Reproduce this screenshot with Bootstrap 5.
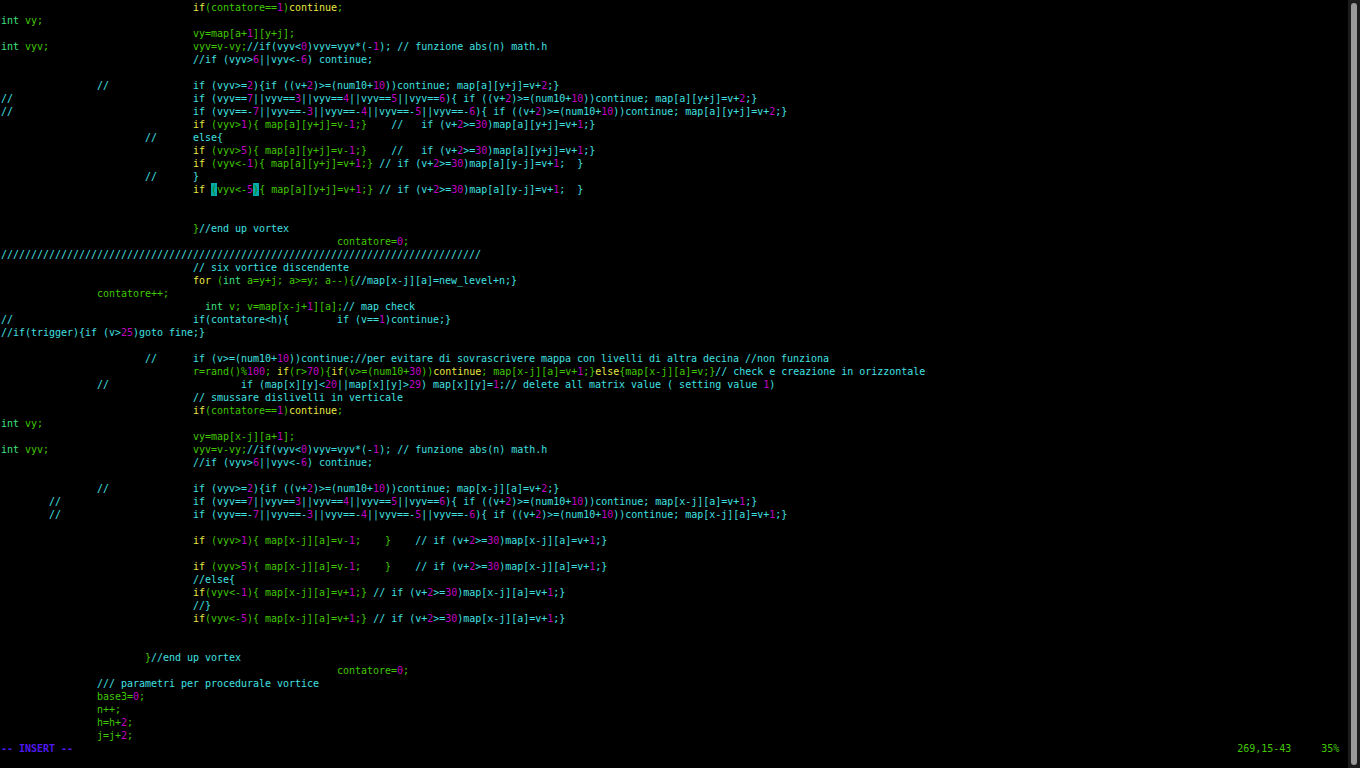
<!DOCTYPE html>
<html lang="it">
<head>
<meta charset="utf-8">
<title>vim</title>
<link href="https://cdn.jsdelivr.net/npm/bootstrap@5.3.0/dist/css/bootstrap.min.css" rel="stylesheet">
<style>
html,body{height:100%;background:#000;overflow:hidden}
.term-shell{height:768px;background:#000}
.term-code{margin:0;padding:1px 0 0 1px;font:10px/13px "DejaVu Sans Mono",monospace;letter-spacing:-.02px;color:#40e0e0;overflow:hidden;white-space:pre}
.kw{color:#e8e840}
.nm{color:#c000c0}
.gr{color:#40c800}
.ty{color:#40e080}
.mt{display:inline-block;background:#00aaaa;color:#208000;height:13px}
.md{color:#5018f0;font-weight:700}
.sb-track{width:12px;background:#1c1c1c;padding:3px}
.sb-thumb{width:6px;background:#999;border-radius:3px}
</style>
</head>
<body>
<div class="term-shell d-flex">
<pre class="term-code flex-grow-1">                                <span class="kw">if</span><span class="gr">(contatore==<span class="nm">1</span>)</span><span class="kw">continue</span><span class="gr">;</span>
<span class="ty">int</span><span class="gr"> vy;</span>
                                <span class="gr">vy=map[a+<span class="nm">1</span>][y+j];</span>
<span class="ty">int</span><span class="gr"> vyv;</span>                        <span class="gr">vyv=v-vy;</span>//if(vyv&lt;<span class="nm">0</span>)vyv=vyv*(-<span class="nm">1</span>); // funzione abs(n) math.h
                                //if (vyv&gt;<span class="nm">6</span>||vyv&lt;-<span class="nm">6</span>) continue;

                //              if (vyv&gt;=<span class="nm">2</span>){if ((v+<span class="nm">2</span>)&gt;=(num10+<span class="nm">10</span>))continue; map[a][y+j]=v+<span class="nm">2</span>;}
//                              if (vyv==<span class="nm">7</span>||vyv==<span class="nm">3</span>||vyv==<span class="nm">4</span>||vyv==<span class="nm">5</span>||vyv==<span class="nm">6</span>){ if ((v+<span class="nm">2</span>)&gt;=(num10+<span class="nm">10</span>))continue; map[a][y+j]=v+<span class="nm">2</span>;}
//                              if (vyv==-<span class="nm">7</span>||vyv==-<span class="nm">3</span>||vyv==-<span class="nm">4</span>||vyv==-<span class="nm">5</span>||vyv==-<span class="nm">6</span>){ if ((v+<span class="nm">2</span>)&gt;=(num10+<span class="nm">10</span>))continue; map[a][y+j]=v+<span class="nm">2</span>;}
                                <span class="kw">if</span><span class="gr"> (vyv&gt;<span class="nm">1</span>){ map[a][y+j]=v-<span class="nm">1</span>;}</span>    //   if (v+<span class="nm">2</span>&gt;=<span class="nm">30</span>)map[a][y+j]=v+<span class="nm">1</span>;}
                        //      else{
                                <span class="kw">if</span><span class="gr"> (vyv&gt;<span class="nm">5</span>){ map[a][y+j]=v-<span class="nm">1</span>;}</span>    //   if (v+<span class="nm">2</span>&gt;=<span class="nm">30</span>)map[a][y+j]=v+<span class="nm">1</span>;}
                                <span class="kw">if</span><span class="gr"> (vyv&lt;-<span class="nm">1</span>){ map[a][y+j]=v+<span class="nm">1</span>;}</span> // if (v+<span class="nm">2</span>&gt;=<span class="nm">30</span>)map[a][y-j]=v+<span class="nm">1</span>;  }
                        //      }
                                <span class="kw">if</span><span class="gr"> <span class="mt">(</span>vyv&lt;-<span class="nm">5</span><span class="mt">)</span>{ map[a][y+j]=v+<span class="nm">1</span>;}</span> // if (v+<span class="nm">2</span>&gt;=<span class="nm">30</span>)map[a][y-j]=v+<span class="nm">1</span>;  }


                                <span class="gr">}</span>//end up vortex
                                                        <span class="gr">contatore=<span class="nm">0</span>;</span>
////////////////////////////////////////////////////////////////////////////////
                                // six vortice discendente
                                <span class="kw">for</span><span class="gr"> (<span class="ty">int</span> a=y+j; a&gt;=y; a--){</span>//map[x-j][a]=new_level+n;}
                <span class="gr">contatore++;</span>
                                  <span class="ty">int</span><span class="gr"> v; v=map[x-j+<span class="nm">1</span>][a];</span>// map check
//                              if(contatore&lt;h){        if (v==<span class="nm">1</span>)continue;}
//if(trigger){if (v&gt;<span class="nm">25</span>)goto fine;}

                        //      if (v&gt;=(num10+<span class="nm">10</span>))continue;//per evitare di sovrascrivere mappa con livelli di altra decina //non funziona
                                <span class="gr">r=rand()%<span class="nm">100</span>; </span><span class="kw">if</span><span class="gr">(r&gt;<span class="nm">70</span>){</span><span class="kw">if</span><span class="gr">(v&gt;=(num10+<span class="nm">30</span>))</span><span class="kw">continue</span><span class="gr">; map[x-j][a]=v+<span class="nm">1</span>;}</span><span class="kw">else</span><span class="gr">{map[x-j][a]=v;}</span>// check e creazione in orizzontale
                //                      if (map[x][y]&lt;<span class="nm">20</span>||map[x][y]&gt;<span class="nm">29</span>) map[x][y]=<span class="nm">1</span>;// delete all matrix value ( setting value <span class="nm">1</span>)
                                // smussare dislivelli in verticale
                                <span class="kw">if</span><span class="gr">(contatore==<span class="nm">1</span>)</span><span class="kw">continue</span><span class="gr">;</span>
<span class="ty">int</span><span class="gr"> vy;</span>
                                <span class="gr">vy=map[x-j][a+<span class="nm">1</span>];</span>
<span class="ty">int</span><span class="gr"> vyv;</span>                        <span class="gr">vyv=v-vy;</span>//if(vyv&lt;<span class="nm">0</span>)vyv=vyv*(-<span class="nm">1</span>); // funzione abs(n) math.h
                                //if (vyv&gt;<span class="nm">6</span>||vyv&lt;-<span class="nm">6</span>) continue;

                //              if (vyv&gt;=<span class="nm">2</span>){if ((v+<span class="nm">2</span>)&gt;=(num10+<span class="nm">10</span>))continue; map[x-j][a]=v+<span class="nm">2</span>;}
        //                      if (vyv==<span class="nm">7</span>||vyv==<span class="nm">3</span>||vyv==<span class="nm">4</span>||vyv==<span class="nm">5</span>||vyv==<span class="nm">6</span>){ if ((v+<span class="nm">2</span>)&gt;=(num10+<span class="nm">10</span>))continue; map[x-j][a]=v+<span class="nm">1</span>;}
        //                      if (vyv==-<span class="nm">7</span>||vyv==-<span class="nm">3</span>||vyv==-<span class="nm">4</span>||vyv==-<span class="nm">5</span>||vyv==-<span class="nm">6</span>){ if ((v+<span class="nm">2</span>)&gt;=(num10+<span class="nm">10</span>))continue; map[x-j][a]=v+<span class="nm">1</span>;}

                                <span class="kw">if</span><span class="gr"> (vyv&gt;<span class="nm">1</span>){ map[x-j][a]=v-<span class="nm">1</span>;    }</span>    // if (v+<span class="nm">2</span>&gt;=<span class="nm">30</span>)map[x-j][a]=v+<span class="nm">1</span>;}

                                <span class="kw">if</span><span class="gr"> (vyv&gt;<span class="nm">5</span>){ map[x-j][a]=v-<span class="nm">1</span>;    }</span>    // if (v+<span class="nm">2</span>&gt;=<span class="nm">30</span>)map[x-j][a]=v+<span class="nm">1</span>;}
                                //else{
                                <span class="kw">if</span><span class="gr">(vyv&lt;-<span class="nm">1</span>){ map[x-j][a]=v+<span class="nm">1</span>;}</span> // if (v+<span class="nm">2</span>&gt;=<span class="nm">30</span>)map[x-j][a]=v+<span class="nm">1</span>;}
                                //}
                                <span class="kw">if</span><span class="gr">(vyv&lt;-<span class="nm">5</span>){ map[x-j][a]=v+<span class="nm">1</span>;}</span> // if (v+<span class="nm">2</span>&gt;=<span class="nm">30</span>)map[x-j][a]=v+<span class="nm">1</span>;}


                        <span class="gr">}</span>//end up vortex
                                                        <span class="gr">contatore=<span class="nm">0</span>;</span>
                /// parametri per procedurale vortice
                <span class="gr">base3=<span class="nm">0</span>;</span>
                <span class="gr">n++;</span>
                <span class="gr">h=h+<span class="nm">2</span>;</span>
                <span class="gr">j=j+<span class="nm">2</span>;</span>
<span class="md">-- INSERT --</span>                                                                                                                                                                                                  <span class="gr">269,15-43     35%</span></pre>
<div class="sb-track flex-shrink-0 d-flex"><div class="sb-thumb flex-grow-1"></div></div>
</div>
<script src="https://cdn.jsdelivr.net/npm/bootstrap@5.3.0/dist/js/bootstrap.bundle.min.js"></script>
</body>
</html>
